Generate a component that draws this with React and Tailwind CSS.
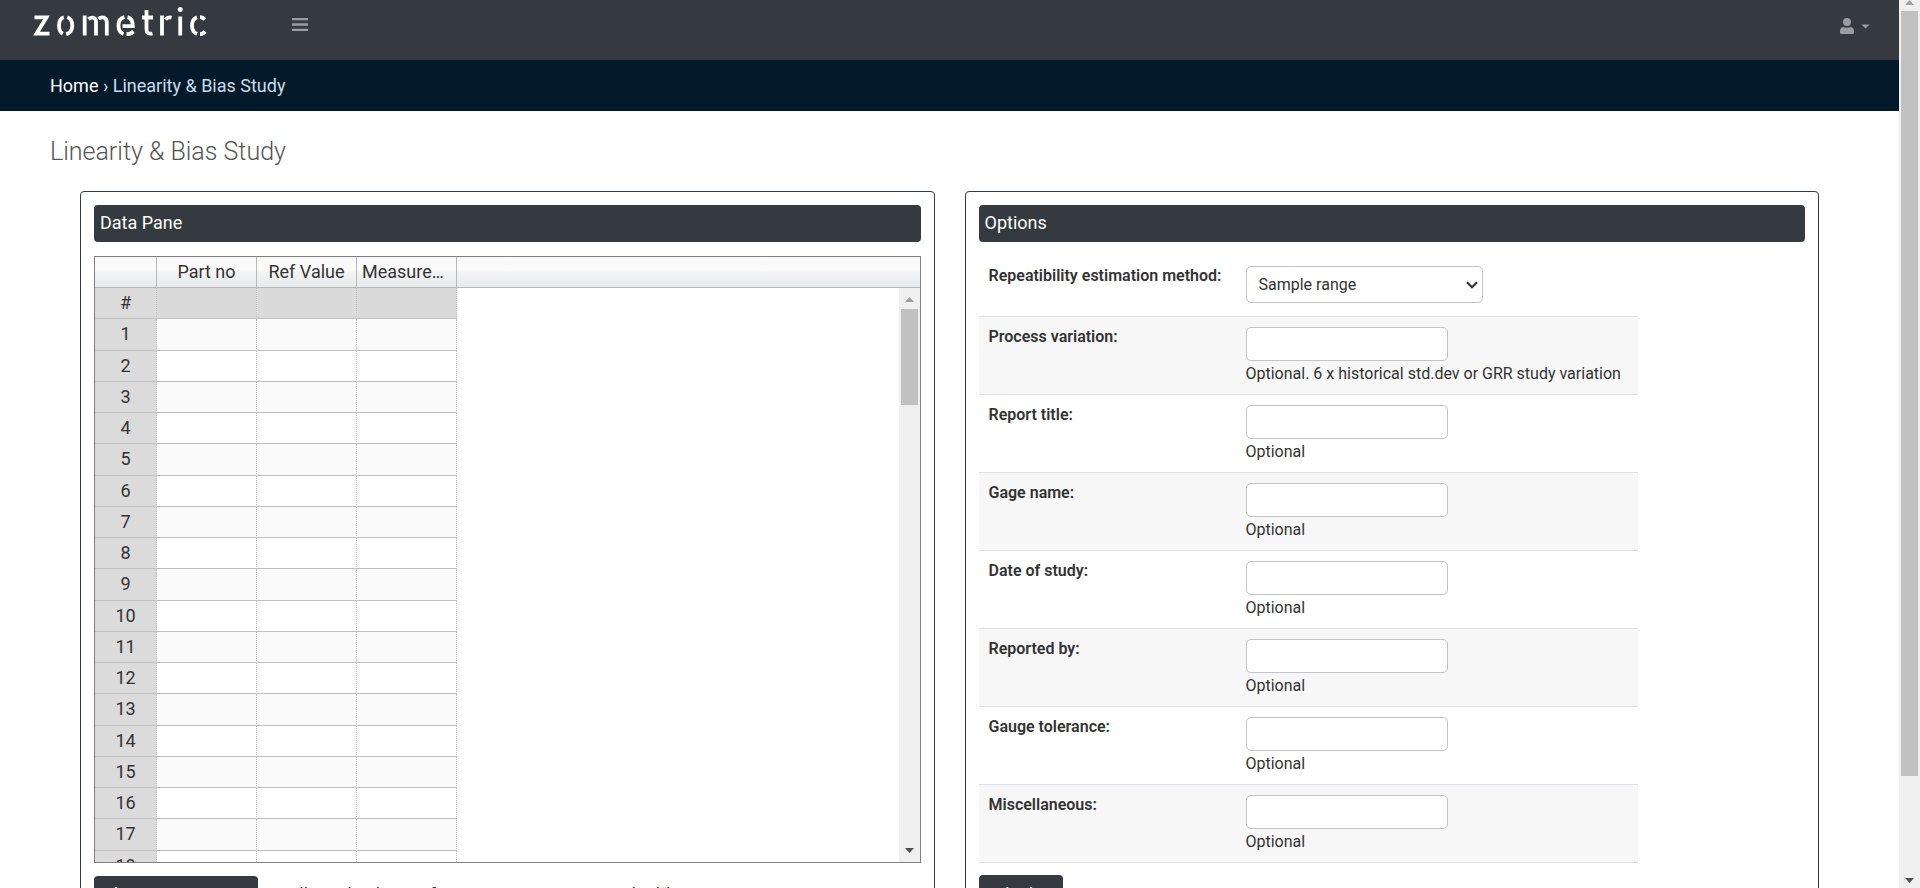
const COLUMNS = ["Part no", "Ref Value", "Measurements"];
const ROWS = ["#", ...Array.from({ length: 19 }, (_, i) => String(i + 1))];

const FIELDS = [
  { id: "variation", label: "Process variation:", hint: "Optional. 6 x historical std.dev or GRR study variation" },
  { id: "title", label: "Report title:", hint: "Optional" },
  { id: "gage", label: "Gage name:", hint: "Optional" },
  { id: "date", label: "Date of study:", hint: "Optional" },
  { id: "reporter", label: "Reported by:", hint: "Optional" },
  { id: "tolerance", label: "Gauge tolerance:", hint: "Optional" },
  { id: "misc", label: "Miscellaneous:", hint: "Optional" },
];

function Logo() {
  return (
    <svg role="img" aria-label="zometric" width="176" height="40" viewBox="32 0 176 40" fill="none" stroke="#fff" strokeWidth="3.8">
      <path d="M34.5 17.300H46.500L36.500 33.700H49.500" />
      <path d="M63.800 17.200C60.500 18.200 59 21 59 25.500C59 29.500 60.300 32.500 62.800 33.800M67.300 17.200C70.700 18.300 72.300 21 72.300 25.500C72.300 30 70.500 33 66.200 34.200" />
      <path d="M84.700 15.500V35.500M88.500 19.200C91.500 16.800 96 16.800 96 22V35.500M98.500 18.800C101.500 16.600 106.800 16.800 106.800 22.500V35.500" />
      <path d="M124.500 17.200C120.500 18 118.500 21 118.500 25.500C118.500 30 120.200 33 123.500 34M127.500 17.200C131 18 132.800 21 132.800 26.200H122.500M126.500 34.200C129.500 34.200 131.500 33.300 133.500 31.500" />
      <path d="M146.500 10V29.500C146.500 32.800 148.500 34.300 152.500 33.500M142 17.500H153" />
      <path d="M162 15.500V35.500M165.500 19.500C167 17.600 169 17 171.500 17.600" />
      <path d="M180.200 16.500V35.500" />
      <circle cx="180.200" cy="9.500" r="2.500" fill="#fff" stroke="none" />
      <path d="M197 17.300C193.800 18.500 192 21.300 192 25.500C192 30 193.800 32.800 197 34M200 17.200C202 17.200 203.500 18 204.700 19.600M200 34.200C202 34.200 203.700 33.200 205 31.500" />
    </svg>
  );
}

function PanelTitle({ children }) {
  return <h2 className="rounded-sm bg-[#343a40] px-1.5 pt-1 pb-[5px] text-lg leading-7 text-white">{children}</h2>;
}

function Arrow({ up, className }) {
  return (
    <svg width="9" height="5" viewBox="0 0 9 5" className={className}>
      <path d={up ? "M0 5H9L4.5 0Z" : "M0 0H9L4.5 5Z"} fill="currentColor" />
    </svg>
  );
}

function DataGrid() {
  return (
    <div className="relative mt-3.5 h-[607px] overflow-hidden border border-[#808080]">
      <table className="h-[656px] w-full table-fixed border-separate border-spacing-0 text-lg leading-6">
        <colgroup>
          <col className="w-[62px]" />
          <col className="w-[100px]" />
          <col className="w-[100px]" />
          <col className="w-[100px]" />
          <col />
        </colgroup>
        <thead>
          <tr className="h-[31px] bg-linear-to-b from-[#fafafa] from-45% via-[#f1f3f3] via-50% to-[#e7eaec]">
            <td className="border-r border-b border-[#b8b8b8] p-0" />
            {COLUMNS.map((name) => (
              <th key={name} scope="col" className="border-r border-b border-[#b8b8b8] p-0 font-normal">
                <div className="truncate px-[5px]">{name}</div>
              </th>
            ))}
            <td className="border-b border-[#b8b8b8] p-0" />
          </tr>
        </thead>
        <tbody>
          {ROWS.map((name, i) => {
            const fill = i === 0 ? "bg-[#dadada]" : i % 2 ? "bg-[#fafafa]" : "bg-white";
            return (
              <tr key={name}>
                <th scope="row" className="border-r border-b border-[#c0c0c0] bg-[#dbdbdb] p-0 font-normal [border-right-style:dotted]">
                  {name}
                </th>
                {COLUMNS.map((column) => (
                  <td key={column} className={`border-r border-b border-[#c0c0c0] p-0 [border-right-style:dotted] ${fill}`} />
                ))}
                <td className="p-0" />
              </tr>
            );
          })}
        </tbody>
      </table>
      <div aria-hidden="true" className="absolute top-[31px] right-0 bottom-0 flex w-[21px] flex-col items-center bg-[#f0f0f0]">
        <Arrow up className="mt-[9px] shrink-0 text-[#a0a0a0]" />
        <div className="mt-[7px] h-24 w-[17px] bg-[#c1c1c1]" />
        <Arrow className="mt-auto mb-[9px] text-[#505050]" />
      </div>
    </div>
  );
}

function OptionsForm() {
  return (
    <div className="mt-3.5 w-[659px] text-base leading-5">
      <div className="flex h-15 px-2.5 pt-2.5">
        <label htmlFor="method" className="w-[257px] font-semibold">Repeatibility estimation method:</label>
        <div className="relative h-[37px] w-[237px]">
          <select id="method" defaultValue="Sample range" className="h-full w-full appearance-none rounded-[5px] border border-[#c4c4c4] bg-white px-3 text-base">
            <option>Sample range</option>
          </select>
          <svg aria-hidden="true" width="12" height="8" viewBox="0 0 12 8" className="pointer-events-none absolute top-[15px] right-[5px]" fill="none" stroke="#333" strokeWidth="2.2">
            <path d="M1 1.200L6 6.200L11 1.200" />
          </svg>
        </div>
      </div>
      {FIELDS.map((field) => (
        <div key={field.id} className="flex h-[78px] border-t border-[#dee2e6] px-2.5 pt-2.5 odd:bg-white even:bg-[#f7f7f7] last:border-b last:h-[79px]">
          <label htmlFor={field.id} className="w-[257px] shrink-0 font-semibold">{field.label}</label>
          <div>
            <input id={field.id} type="text" aria-describedby={`${field.id}-hint`} className="block h-[34px] w-[202px] rounded-[5px] border border-[#c4c4c4] bg-white px-2" />
            <p id={`${field.id}-hint`} className="leading-[26px] whitespace-nowrap">{field.hint}</p>
          </div>
        </div>
      ))}
    </div>
  );
}

export default function App() {
  return (
    <div className="flex h-screen overflow-hidden bg-white font-['Roboto',sans-serif] text-[#333]">
      <div className="min-w-0 flex-1">
        <header className="flex h-15 items-start bg-[#343a40] pr-[29px] pl-8 text-[#999ca0]">
          <Logo />
          <button type="button" aria-label="Toggle menu" className="ml-[84px] pt-[18px]">
            <svg width="16" height="13" viewBox="0 0 16 13" fill="currentColor">
              <path d="M0 0H16V2.300H0ZM0 5.300H16V7.700H0ZM0 10.700H16V13H0Z" />
            </svg>
          </button>
          <button type="button" aria-label="Account" className="ml-auto flex items-center gap-[7px] pt-[18px]">
            <svg width="14" height="16" viewBox="0 0 14 16" fill="currentColor">
              <circle cx="7" cy="4" r="4" />
              <path d="M3.500 9C5.500 9.900 8.500 9.900 10.500 9C13 9.200 14 10.800 14 13V14.500Q14 16 12.500 16H1.500Q0 16 0 14.500V13C0 10.800 1 9.200 3.500 9Z" />
            </svg>
            <svg width="9" height="5" viewBox="0 0 9 5" fill="currentColor">
              <path d="M0.500 0.500H8.500L4.500 4.500Z" />
            </svg>
          </button>
        </header>
        <nav aria-label="Breadcrumb" className="flex h-[51px] items-center bg-[#041a2a] px-12.5 text-lg text-[#c9dceb]">
          <a href="#home" className="text-white">Home</a>
          <span className="whitespace-pre"> › Linearity &amp; Bias Study</span>
        </nav>
        <h1 className="px-12.5 pt-[21px] pb-[19px] text-[25px] leading-10 font-light text-[#555]">Linearity &amp; Bias Study</h1>
        <main className="grid grid-cols-2 gap-[30px] px-20">
          <section className="rounded-sm border border-[#343a40] p-[13px]">
            <PanelTitle>Data Pane</PanelTitle>
            <DataGrid />
            <div className="mt-[13px] flex items-start gap-5 text-lg">
              <button type="button" className="w-[164px] rounded-sm bg-[#343a40] px-2 py-[5px] text-left text-white">Clear measures</button>
              <p className="py-[5px]">Cells and columns for a measurement are editable</p>
            </div>
          </section>
          <section className="rounded-sm border border-[#343a40] p-[13px]">
            <PanelTitle>Options</PanelTitle>
            <OptionsForm />
            <button type="button" className="mt-3 rounded-sm bg-[#343a40] px-[5px] pt-1.5 pb-1 text-lg text-white">Calculate</button>
          </section>
        </main>
      </div>
      <div aria-hidden="true" className="flex h-full w-[21px] flex-col items-center bg-[#f0f0f0]">
        <Arrow up className="shrink-0 text-[#a0a0a0]" />
        <div className="mt-1.5 h-[765px] w-[17px] bg-[#c1c1c1]" />
        <Arrow className="mt-auto mb-[5px] shrink-0 text-[#505050]" />
      </div>
    </div>
  );
}
